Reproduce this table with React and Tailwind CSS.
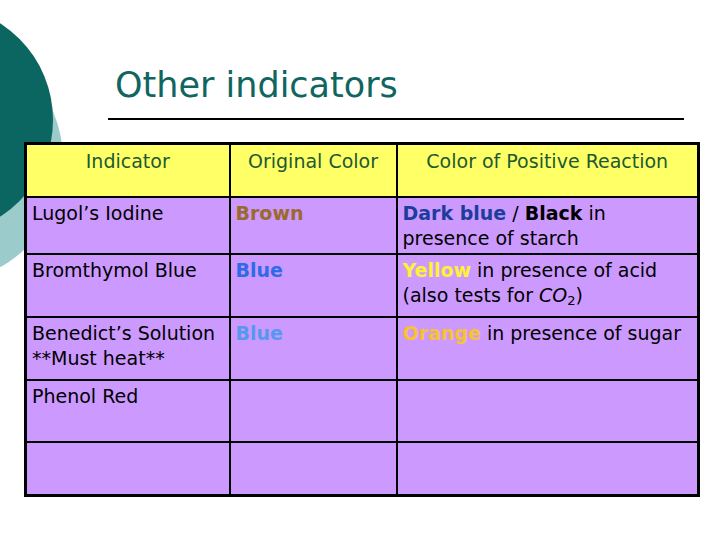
export default function App() {
  const font = { fontFamily: '"DejaVu Sans", "Liberation Sans", sans-serif' };
  return (
    <div className="relative w-[720px] h-[540px] bg-white overflow-hidden" style={font}>
      {/* Corner decoration */}
      <svg className="absolute left-0 top-0" width="120" height="300" viewBox="0 0 120 300">
        <circle cx="-60" cy="160" r="123" fill="#9ccbcb" />
        <circle cx="-62" cy="120" r="115" fill="#0b6561" />
      </svg>

      <div className="relative pt-[64px] pl-[108px] pr-[36px]">
        <h1 className="pl-[7px] text-[35px] leading-[42px] text-[#116561]">Other indicators</h1>
        <div className="mt-[12px] h-[2px] bg-black w-[576px]" />
      </div>

      <div className="relative mt-[22px] ml-[24px]">
        <table className="border-collapse border-[3px] border-black w-[673px] table-fixed text-[19px] leading-[25px] text-black">
          <colgroup>
            <col className="w-[204px]" />
            <col className="w-[167px]" />
            <col className="w-[302px]" />
          </colgroup>
          <thead>
            <tr className="h-[53px] bg-[#ffff66] text-[#1b5a30]">
              <th className="border-2 border-black align-top font-normal pt-[4px]">Indicator</th>
              <th className="border-2 border-black align-top font-normal pt-[4px]">Original Color</th>
              <th className="border-2 border-black align-top font-normal pt-[4px]">Color of Positive Reaction</th>
            </tr>
          </thead>
          <tbody className="bg-[#cc99ff]">
            <tr className="h-[57px]">
              <td className="border-2 border-black align-top px-[5px] pt-[3px]">Lugol’s Iodine</td>
              <td className="border-2 border-black align-top px-[5px] pt-[3px] font-bold text-[#9a6a2c]">Brown</td>
              <td className="border-2 border-black align-top px-[5px] pt-[3px]">
                <span className="font-bold text-[#1d3d9c]">Dark blue</span> / <span className="font-bold">Black</span> in
                <br />
                presence of starch
              </td>
            </tr>
            <tr className="h-[63px]">
              <td className="border-2 border-black align-top px-[5px] pt-[3px]">Bromthymol Blue</td>
              <td className="border-2 border-black align-top px-[5px] pt-[3px] font-bold text-[#2f6be6]">Blue</td>
              <td className="border-2 border-black align-top px-[5px] pt-[3px]">
                <span className="font-bold text-[#fff133]">Yellow</span> in presence of acid
                <br />
                (also tests for <i>CO</i>
                <sub className="text-[13px]">2</sub>)
              </td>
            </tr>
            <tr className="h-[63px]">
              <td className="border-2 border-black align-top px-[5px] pt-[3px]">
                Benedict’s Solution
                <br />
                **Must heat**
              </td>
              <td className="border-2 border-black align-top px-[5px] pt-[3px] font-bold text-[#5599ee]">Blue</td>
              <td className="border-2 border-black align-top px-[5px] pt-[3px] whitespace-nowrap">
                <span className="font-bold text-[#f8c232]">Orange</span> in presence of sugar
              </td>
            </tr>
            <tr className="h-[62px]">
              <td className="border-2 border-black align-top px-[5px] pt-[3px]">Phenol Red</td>
              <td className="border-2 border-black align-top px-[5px] pt-[3px]"></td>
              <td className="border-2 border-black align-top px-[5px] pt-[3px]"></td>
            </tr>
            <tr className="h-[54px]">
              <td className="border-2 border-black"></td>
              <td className="border-2 border-black"></td>
              <td className="border-2 border-black"></td>
            </tr>
          </tbody>
        </table>
      </div>
    </div>
  );
}
